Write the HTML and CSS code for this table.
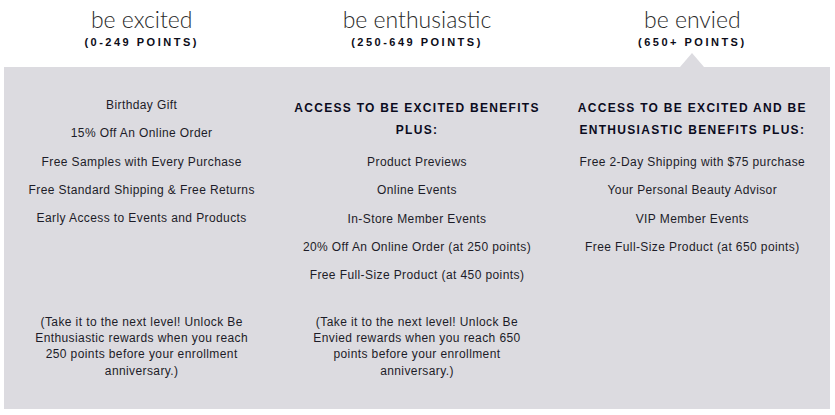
FILE: index.html
```html
<!DOCTYPE html>
<html>
<head>
<meta charset="utf-8">
<link rel="stylesheet" href="styles.css">
</head>
<body>
<div class="tiers">
  <div class="tier-heads">
    <div class="tier-head">
      <div class="tier-name">be excited</div>
      <div class="tier-points">(0-249 POINTS)</div>
    </div>
    <div class="tier-head">
      <div class="tier-name">be enthusiastic</div>
      <div class="tier-points">(250-649 POINTS)</div>
    </div>
    <div class="tier-head active">
      <div class="tier-name">be envied</div>
      <div class="tier-points">(650+ POINTS)</div>
    </div>
  </div>
  <div class="panel">
    <div class="col">
      <ul class="benefits">
        <li>Birthday Gift</li>
        <li>15% Off An Online Order</li>
        <li>Free Samples with Every Purchase</li>
        <li>Free Standard Shipping &amp; Free Returns</li>
        <li>Early Access to Events and Products</li>
      </ul>
      <p class="note">(Take it to the next level! Unlock Be Enthusiastic rewards when you reach 250 points before your enrollment anniversary.)</p>
    </div>
    <div class="col">
      <h3 class="col-title">ACCESS TO BE EXCITED BENEFITS PLUS:</h3>
      <ul class="benefits">
        <li>Product Previews</li>
        <li>Online Events</li>
        <li>In-Store Member Events</li>
        <li>20% Off An Online Order (at 250 points)</li>
        <li>Free Full-Size Product (at 450 points)</li>
      </ul>
      <p class="note">(Take it to the next level! Unlock Be Envied rewards when you reach 650 points before your enrollment anniversary.)</p>
    </div>
    <div class="col">
      <h3 class="col-title">ACCESS TO BE EXCITED AND BE ENTHUSIASTIC BENEFITS PLUS:</h3>
      <ul class="benefits">
        <li>Free 2-Day Shipping with $75 purchase</li>
        <li>Your Personal Beauty Advisor</li>
        <li>VIP Member Events</li>
        <li>Free Full-Size Product (at 650 points)</li>
      </ul>
    </div>
  </div>
</div>
</body>
</html>
```
FILE: styles.css
```css
* { box-sizing: border-box; }
html, body { margin: 0; padding: 0; background: #fff; }
body { font-family: "Liberation Sans", Arial, sans-serif; color: #1c1c28; }

.tiers { padding: 0 5px 0 4px; }

.tier-heads {
  display: grid;
  grid-template-columns: repeat(3, 1fr);
  height: 67px;
  padding-top: 5px;
}
.tier-head { text-align: center; position: relative; }
.tier-name {
  font-family: Lato, "Open Sans", sans-serif;
  font-weight: 300;
  font-size: 23px;
  line-height: 28px;
  color: #2a2a2a;
}
.tier-points {
  margin-top: 2px;
  font-family: "Liberation Sans", Arial, sans-serif;
  font-weight: 700;
  font-size: 11px;
  line-height: 14px;
  letter-spacing: 2.5px;
  color: #0c0c18;
}
.tier-head.active::after {
  content: "";
  position: absolute;
  left: 50%;
  bottom: 0;
  margin-left: -12px;
  width: 0;
  height: 0;
  border-left: 12px solid transparent;
  border-right: 12px solid transparent;
  border-bottom: 14px solid #dcdbe0;
}

.panel {
  display: grid;
  grid-template-columns: repeat(3, 1fr);
  background: #dcdbe0;
  height: 342px;
  padding: 24px 0 30px;
}
.col {
  display: flex;
  flex-direction: column;
  align-items: center;
  text-align: center;
  padding: 0 12px;
}
.col-title {
  margin: 7px 0 7px;
  font-size: 12px;
  font-weight: 700;
  line-height: 21.5px;
  letter-spacing: 1.3px;
  color: #0b0b1e;
}
.benefits {
  list-style: none;
  margin: 0;
  padding: 0;
}
.benefits li {
  font-size: 12px;
  line-height: 28.3px;
  letter-spacing: 0.4px;
}
.note {
  margin: auto 0 0;
  max-width: 222px;
  font-size: 12px;
  line-height: 16.3px;
  letter-spacing: 0.4px;
}
```
